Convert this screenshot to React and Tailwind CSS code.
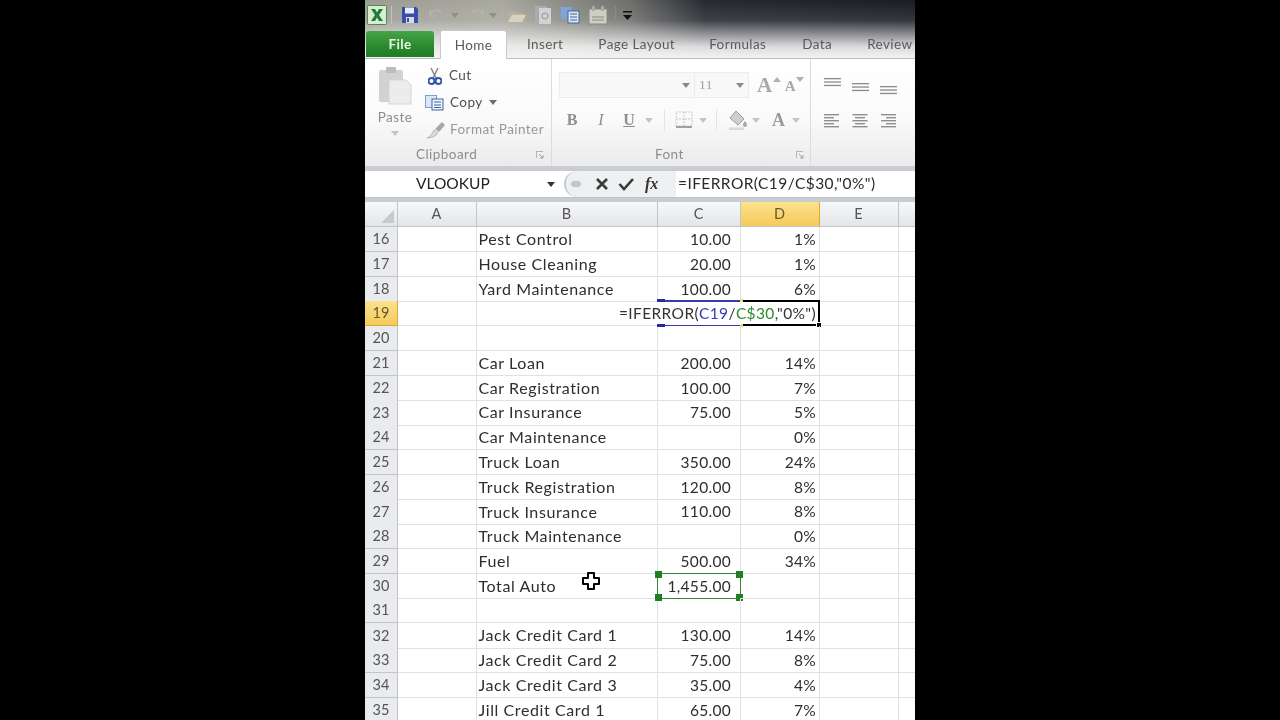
import React from "react";

const rows = [
  [16, "Pest Control", "10.00", "1%"],
  [17, "House Cleaning", "20.00", "1%"],
  [18, "Yard Maintenance", "100.00", "6%"],
  [19, "", "", ""],
  [20, "", "", ""],
  [21, "Car Loan", "200.00", "14%"],
  [22, "Car Registration", "100.00", "7%"],
  [23, "Car Insurance", "75.00", "5%"],
  [24, "Car Maintenance", "", "0%"],
  [25, "Truck Loan", "350.00", "24%"],
  [26, "Truck Registration", "120.00", "8%"],
  [27, "Truck Insurance", "110.00", "8%"],
  [28, "Truck Maintenance", "", "0%"],
  [29, "Fuel", "500.00", "34%"],
  [30, "Total Auto", "1,455.00", ""],
  [31, "", "", ""],
  [32, "Jack Credit Card 1", "130.00", "14%"],
  [33, "Jack Credit Card 2", "75.00", "8%"],
  [34, "Jack Credit Card 3", "35.00", "4%"],
  [35, "Jill Credit Card 1", "65.00", "7%"],
];

const Caret = ({ c = "#9a9a9a" }) => (
  <svg width="8" height="5" viewBox="0 0 8 5" className="shrink-0"><path d="M0 0h8L4 5z" fill={c} /></svg>
);

const Lines = ({ align = "left", gray = "#8f8f8f" }) => {
  const w = [15, 10, 15, 10, 15];
  return (
    <svg width="16" height="14" viewBox="0 0 16 14">
      {w.map((v, i) => (
        <rect key={i} y={i * 3} x={align === "left" ? 0 : align === "right" ? 16 - v : (16 - v) / 2} width={v} height="1.4" fill={gray} />
      ))}
    </svg>
  );
};

const VAlign = ({ mt }) => (
  <svg width="18" height="12" viewBox="0 0 18 12" className={mt}>
    <rect y="0" width="17" height="1.3" fill="#8a8a8a" /><rect y="3.4" width="17" height="1.3" fill="#8a8a8a" /><rect y="6.8" width="17" height="1.3" fill="#8a8a8a" />
  </svg>
);

const Launcher = () => (
  <svg width="10" height="10" viewBox="0 0 10 10"><path d="M1 1h7v1H2v6H1z" fill="#b5b5b5" /><path d="M4 4l4 4M8 5v3H5" stroke="#9aa0a6" fill="none" /></svg>
);

export default function App() {
  return (
    <div className="w-[1280px] h-[720px] bg-black flex justify-center overflow-hidden font-['Lato','Liberation_Sans',sans-serif]">
      <div className="w-[550px] h-[720px] bg-white flex flex-col overflow-hidden blur-[0.35px]">
        {/* title + tabs */}
        <div className="h-[59px] shrink-0 flex flex-col bg-[linear-gradient(180deg,rgba(243,243,243,0)_0%,rgba(243,243,243,0.12)_35%,rgba(243,243,243,0.88)_80%,#f3f3f3_100%),linear-gradient(90deg,#9c9c94_0%,#a8a89e_25%,#6e6e6c_48%,#26282f_62%,#1a1c24_100%)] border-b border-[#bdbdbd]">
          <div className="h-[30px] flex items-center pl-[2px]">
            <svg width="20" height="20" viewBox="0 0 20 20">
              <rect x="0.5" y="0.5" width="19" height="19" rx="1" fill="#d8ecd2" stroke="#4f8a4f" />
              <path d="M4 4h4l2 3.6L12 4h4l-4 6 4 6h-4l-2-3.6L8 16H4l4-6z" fill="#1e7d3a" />
            </svg>
            <div className="w-px h-[18px] bg-[#c5c5c0] ml-[4px]" />
            <svg width="18" height="18" viewBox="0 0 18 18" className="ml-[9px]">
              <path d="M1 1h14l2 2v14H1z" fill="#3b4ca8" />
              <rect x="4" y="1.5" width="9" height="6" fill="#e8ecf8" />
              <rect x="5" y="11" width="8" height="6" fill="#d7d9e6" /><rect x="6" y="12" width="2" height="4" fill="#3b4ca8" />
            </svg>
            <svg width="18" height="16" viewBox="0 0 18 16" className="ml-[9px] opacity-70"><path d="M2 9a6 6 0 0 1 11-3M2 3v6h6" fill="none" stroke="#b5b5b5" strokeWidth="2" /></svg>
            <div className="ml-[5px]"><Caret c="#8f8f8f" /></div>
            <svg width="18" height="16" viewBox="0 0 18 16" className="ml-[8px] opacity-70"><path d="M16 9a6 6 0 0 0-11-3M16 3v6h-6" fill="none" stroke="#b5b5b5" strokeWidth="2" /></svg>
            <div className="ml-[4px]"><Caret c="#8f8f8f" /></div>
            <svg width="20" height="18" viewBox="0 0 20 18" className="ml-[10px]"><path d="M1 5h6l2 2h8v9H1z" fill="#b8b19c" /><path d="M1 16l4-7h14l-4 7z" fill="#d8d2be" /></svg>
            <svg width="18" height="20" viewBox="0 0 18 20" className="ml-[7px]"><rect x="1" y="1" width="12" height="17" fill="#a9acac" /><rect x="5" y="3" width="12" height="16" fill="#cfd2d2" /><circle cx="11" cy="11" r="3" fill="none" stroke="#8f9494" /></svg>
            <svg width="20" height="18" viewBox="0 0 20 18" className="ml-[8px]"><rect x="1" y="1" width="11" height="12" fill="#7fa5d8" /><rect x="8" y="5" width="11" height="12" fill="#dbe7f6" stroke="#41679f" /><path d="M10 8h7M10 11h7M10 14h7" stroke="#41679f" /></svg>
            <svg width="20" height="20" viewBox="0 0 20 20" className="ml-[8px]"><rect x="1" y="4" width="18" height="15" fill="#cfcdc4" stroke="#8a8a82" /><rect x="4" y="1" width="3" height="5" fill="#a9a9a2" /><rect x="13" y="1" width="3" height="5" fill="#a9a9a2" /><path d="M4 12h12M4 15h12" stroke="#8a8a82" /></svg>
            <div className="w-px h-[18px] bg-[#8a8a88] ml-[7px]" />
            <svg width="9" height="9" viewBox="0 0 9 9" className="ml-[7px]"><rect width="9" height="1.5" fill="#111" /><path d="M0 4h9L4.5 9z" fill="#111" /></svg>
          </div>
          <div className="flex-1 flex items-end text-[13.5px] tracking-[0.4px] text-[#5a5a5a] whitespace-nowrap">
            <div className="w-[68px] h-[26px] ml-px bg-[linear-gradient(180deg,#47a347_0%,#2a8a30_60%,#1f7a26_100%)] rounded-t-[3px] text-[#e9f5e2] font-bold flex items-center justify-center mb-[1px]">File</div>
            <div className="w-[67px] h-[29px] ml-[6px] bg-white rounded-t-[3px] border-x border-t border-[#c9c9c9] flex items-center justify-center -mb-px">Home</div>
            <div className="ml-[20px] h-[28px] flex items-center">Insert</div>
            <div className="ml-[35px] h-[28px] flex items-center">Page Layout</div>
            <div className="ml-[34px] h-[28px] flex items-center">Formulas</div>
            <div className="ml-[36px] h-[28px] flex items-center">Data</div>
            <div className="ml-[35px] h-[28px] flex items-center">Review</div>
          </div>
        </div>

        {/* ribbon */}
        <div className="h-[107px] shrink-0 flex bg-[linear-gradient(180deg,#ffffff_0%,#fafafa_55%,#ebebeb_100%)] text-[#8e8e8e] text-[13.5px] tracking-[0.45px]">
          <div className="w-[187px] shrink-0 border-r border-[#dcdcdc] flex flex-col">
            <div className="flex-1 flex">
              <div className="w-[60px] flex flex-col items-center pt-[8px]">
                <svg width="34" height="38" viewBox="0 0 34 38">
                  <rect x="1" y="3" width="24" height="32" rx="2" fill="#d2d2d2" />
                  <rect x="8" y="0" width="10" height="6" rx="1" fill="#bdbdbd" />
                  <path d="M11 13h17l5 5v19H11z" fill="#ececec" stroke="#d5d5d5" />
                </svg>
                <div className="mt-[4px] leading-[16px]">Paste</div>
                <div className="mt-[6px]"><Caret c="#c4c4c4" /></div>
              </div>
              <div className="flex flex-col pt-[3px]">
                <div className="h-[27px] flex items-center text-[#4f4f4f] ml-[3px] gap-[7px]">
                  <svg width="14" height="18" viewBox="0 0 14 18"><path d="M3 1l5 10M10 1L5 11" stroke="#8a8a8a" strokeWidth="1.6" /><circle cx="3.5" cy="14" r="3" fill="none" stroke="#2f55a5" strokeWidth="2" /><circle cx="10.5" cy="14" r="3" fill="none" stroke="#2f55a5" strokeWidth="2" /></svg>
                  Cut
                </div>
                <div className="h-[27px] flex items-center text-[#4f4f4f] gap-[6px]">
                  <svg width="19" height="16" viewBox="0 0 19 16"><rect x="0.5" y="0.5" width="11" height="12" fill="#dbe7f6" stroke="#7f9fc9" /><rect x="7" y="4" width="11" height="11" fill="#eef4fb" stroke="#41679f" /><path d="M9 7h7M9 10h7M9 12.5h7" stroke="#41679f" /></svg>
                  Copy
                  <Caret c="#6e6e6e" />
                </div>
                <div className="h-[27px] flex items-center gap-[4px] ml-[1px]">
                  <svg width="20" height="18" viewBox="0 0 20 18"><path d="M1 17c3-1 5-4 7-8l4 3c-2 3-6 5-11 5z" fill="#dcdcd4" stroke="#b8b8b0" /><path d="M9 8l7-7 3 3-6 7z" fill="#a8a8a0" /></svg>
                  <span className="text-[#999]">Format Painter</span>
                </div>
              </div>
            </div>
            <div className="h-[21px] flex items-center justify-between pl-[51px] pr-[6px] mb-[1px]">
              <span>Clipboard</span>
              <Launcher />
            </div>
          </div>

          <div className="w-[259px] shrink-0 border-r border-[#dcdcdc] flex flex-col">
            <div className="flex-1 flex flex-col pl-[7px]">
              <div className="flex items-center mt-[13px] h-[26px]">
                <div className="w-[136px] h-[26px] border border-[#ececec] bg-[#f8f8f8] flex items-center justify-end pr-[4px]"><Caret c="#8a8a8a" /></div>
                <div className="w-[54px] h-[26px] border border-[#ececec] border-l-0 bg-[#f8f8f8] flex items-center justify-between px-[4px] font-['Liberation_Serif',serif] text-[#a0a0a0]">11<Caret c="#8a8a8a" /></div>
                <span className="ml-[8px] text-[21px] font-bold font-['Liberation_Serif',serif] text-[#a8a8a8] leading-none">A</span>
                <svg width="8" height="5" viewBox="0 0 8 5" className="-mt-[12px]"><path d="M0 5h8L4 0z" fill="#b0b0b0" /></svg>
                <span className="ml-[4px] text-[15px] font-bold font-['Liberation_Serif',serif] text-[#a8a8a8] leading-none mt-[3px]">A</span>
                <svg width="8" height="5" viewBox="0 0 8 5" className="-mt-[12px]"><path d="M0 0h8L4 5z" fill="#b0b0b0" /></svg>
              </div>
              <div className="flex items-center mt-[9px] h-[26px] font-['Liberation_Serif',serif] text-[#8e8e8e] text-[16px] tracking-normal">
                <span className="ml-[1px] font-bold w-[24px] text-center">B</span>
                <span className="italic w-[34px] text-center">I</span>
                <span className="underline w-[22px] font-bold text-center">U</span>
                <div className="ml-[5px]"><Caret c="#c4c4c4" /></div>
                <div className="w-px h-[22px] bg-[#e4e4e4] ml-[11px]" />
                <svg width="18" height="18" viewBox="0 0 18 18" className="ml-[10px]"><rect x="1" y="1" width="16" height="14" fill="none" stroke="#c8c8c8" strokeDasharray="2 1" /><path d="M9 1v14M1 8h16" stroke="#c8c8c8" strokeDasharray="2 1" /><rect x="1" y="15" width="16" height="2" fill="#a0a0a0" /></svg>
                <div className="ml-[6px]"><Caret c="#c4c4c4" /></div>
                <div className="w-px h-[22px] bg-[#e4e4e4] ml-[9px]" />
                <svg width="20" height="20" viewBox="0 0 20 20" className="ml-[11px]"><path d="M8 1l8 8-6 6-8-7z" fill="#cfcfcf" stroke="#9a9a9a" /><path d="M17 11c1.500 2 2 3 2 4a2 2 0 0 1-4 0c0-1 .5-2 2-4z" fill="#a8a8a8" /><rect x="1" y="17.500" width="15" height="2.500" fill="#d8d8d8" /></svg>
                <div className="ml-[4px]"><Caret c="#c4c4c4" /></div>
                <span className="ml-[12px] font-bold text-[18px] text-[#9a9a9a]">A</span>
                <div className="ml-[7px]"><Caret c="#c4c4c4" /></div>
              </div>
            </div>
            <div className="h-[21px] flex items-center justify-between pl-[103px] pr-[5px] mb-[1px]">
              <span>Font</span>
              <Launcher />
            </div>
          </div>

          <div className="flex-1 flex flex-col pl-[13px]">
            <div className="flex gap-[10px] mt-[19px] h-[24px]">
              <VAlign mt="mt-0" /><VAlign mt="mt-[5px]" /><VAlign mt="mt-[8px]" />
            </div>
            <div className="flex gap-[12px] mt-[12px]">
              <Lines align="left" /><Lines align="center" /><Lines align="right" />
            </div>
          </div>
        </div>

        {/* gap + formula bar */}
        <div className="h-[5px] shrink-0 bg-[#c9ccd0]" />
        <div className="h-[27px] shrink-0 flex items-center bg-white text-[15.5px] text-[#222] border-b border-[#bfc3c8]">
          <div className="w-[199px] shrink-0 flex items-center pl-[51px]">
            VLOOKUP
            <div className="ml-[57px]"><Caret c="#333" /></div>
          </div>
          <div className="h-[26px] flex-none w-[112px] flex items-center bg-[#eef0f1] rounded-l-[13px] border-l-2 border-[#c6c9cc]">
            <div className="w-[10px] h-[6px] rounded-full bg-[#c3c6c9] ml-[5px]" />
            <svg width="14" height="14" viewBox="0 0 14 14" className="ml-[14px]"><path d="M2 2l10 10M12 2L2 12" stroke="#3a3a3a" strokeWidth="2.600" /></svg>
            <svg width="16" height="14" viewBox="0 0 16 14" className="ml-[9px]"><path d="M1.500 7l4.500 5L15 2" fill="none" stroke="#3a3a3a" strokeWidth="2.600" /></svg>
            <span className="ml-[11px] italic font-bold font-['Liberation_Serif',serif] text-[16px] leading-none text-[#333]">fx</span>
          </div>
          <div className="pl-[2px] whitespace-nowrap tracking-[0.42px] text-[#2b2b2b]">=IFERROR(C19/C$30,"0%")</div>
        </div>
        <div className="h-[4px] shrink-0 bg-[#c9ccd0]" />

        {/* column headers */}
        <div className="h-[25px] shrink-0 grid grid-cols-[33px_79px_181px_83px_79px_79px_1fr] text-[14.500px] text-[#555] bg-[linear-gradient(180deg,#f7f8f9_0%,#e3e5e8_100%)] border-b border-[#c2c4c8]">
          <div className="border-r border-[#c2c4c8] flex items-end justify-end p-[3px]">
            <svg width="13" height="13" viewBox="0 0 13 13"><path d="M13 0v13H0z" fill="#c7cace" /></svg>
          </div>
          {["A", "B", "C"].map((c) => (
            <div key={c} className="border-r border-[#c2c4c8] flex items-center justify-center pr-[1px]">{c}</div>
          ))}
          <div className="border-r border-[#d9a93a] bg-[linear-gradient(180deg,#fae38e_0%,#f6c95a_100%)] flex items-center justify-center pr-[1px] text-[#6b5a28]">D</div>
          <div className="border-r border-[#c2c4c8] flex items-center justify-center pr-[1px]">E</div>
          <div />
        </div>

        {/* sheet */}
        <div className="flex-1 min-h-0 text-[16px] tracking-[0.6px] text-[#2e2e2e]">
          {rows.map(([n, b, c, d]) => {
            const on = n === 19;
            return (
              <div key={n} className="h-[24.78px] grid grid-cols-[33px_79px_181px_83px_79px_79px_1fr]">
                <div className={on
                  ? "bg-[linear-gradient(180deg,#fae38e_0%,#f6c95a_100%)] border-r border-b border-[#d9a93a] flex items-center justify-center text-[14.500px] tracking-normal text-[#6b5a28]"
                  : "bg-[#e9ebee] border-r border-b border-[#c2c4c8] flex items-center justify-center text-[14.500px] tracking-normal text-[#555]"}>{n}</div>
                <div className="border-r border-b border-[#e1e1e1]" />
                <div className="border-r border-b border-[#e1e1e1] flex items-center pl-[1.500px] whitespace-nowrap">{b}</div>
                <div className="relative border-r border-b border-[#e1e1e1] flex items-center justify-end pr-[9px] pt-[1px] text-[15.500px] tracking-[0.3px]">
                  {c}
                  {n === 30 && (
                    <>
                      <div className="absolute -left-px -top-px -right-px -bottom-px border-[1.5px] border-[#2f8a2f]" />
                      <div className="absolute -left-[3px] -top-[3px] w-[7px] h-[7px] bg-[#1f7f26]" />
                      <div className="absolute -right-[3px] -top-[3px] w-[7px] h-[7px] bg-[#1f7f26]" />
                      <div className="absolute -left-[3px] -bottom-[3px] w-[7px] h-[7px] bg-[#1f7f26]" />
                      <div className="absolute -right-[3px] -bottom-[3px] w-[7px] h-[7px] bg-[#1f7f26]" />
                    </>
                  )}
                  {on && (
                    <>
                      <div className="absolute z-10 -left-px -top-px right-0 h-[1.5px] bg-[#3b3ba8]" />
                      <div className="absolute z-10 -left-px -bottom-px right-0 h-[1.5px] bg-[#3b3ba8]" />
                      <div className="absolute z-10 -left-px -top-[2px] w-[8px] h-[3px] bg-[#2a2a98]" />
                      <div className="absolute z-10 -left-px -bottom-[2px] w-[8px] h-[3px] bg-[#2a2a98]" />
                    </>
                  )}
                </div>
                <div className="relative border-r border-b border-[#e1e1e1] flex items-center justify-end pr-[3px] pt-[1px] text-[15.500px] tracking-[0.3px]">
                  {d}
                  {on && (
                    <>
                      <div className="absolute right-[3px] top-[1px] bottom-[1px] flex items-center whitespace-nowrap bg-white pl-[1px] tracking-[0.38px] text-[#333]">
                        =IFERROR(<span className="text-[#3a3ab0]">C19</span>/<span className="text-[#2f8a2f]">C$30</span>,"0%")
                      </div>
                      <div className="absolute left-0 -top-px -right-px -bottom-px border-2 border-l-0 border-black" />
                      <div className="absolute -right-[3px] -bottom-[3px] w-[6px] h-[6px] bg-black border border-white" />
                      <div className="absolute -left-[1px] -top-[2px] w-[3px] h-[3px] bg-[#e8e060]" />
                      <div className="absolute -left-[1px] -bottom-[2px] w-[3px] h-[3px] bg-[#e8e060]" />
                    </>
                  )}
                </div>
                <div className="border-r border-b border-[#e1e1e1]" />
                <div className="border-b border-[#e1e1e1]" />
              </div>
            );
          })}
        </div>
      </div>
      <svg width="20" height="20" viewBox="0 0 20 20" className="absolute left-[581px] top-[571px]">
        <path d="M7 2h6v5h5v6h-5v5H7v-5H2V7h5z" fill="#fff" stroke="#000" strokeWidth="2" strokeLinejoin="round" />
      </svg>
    </div>
  );
}
